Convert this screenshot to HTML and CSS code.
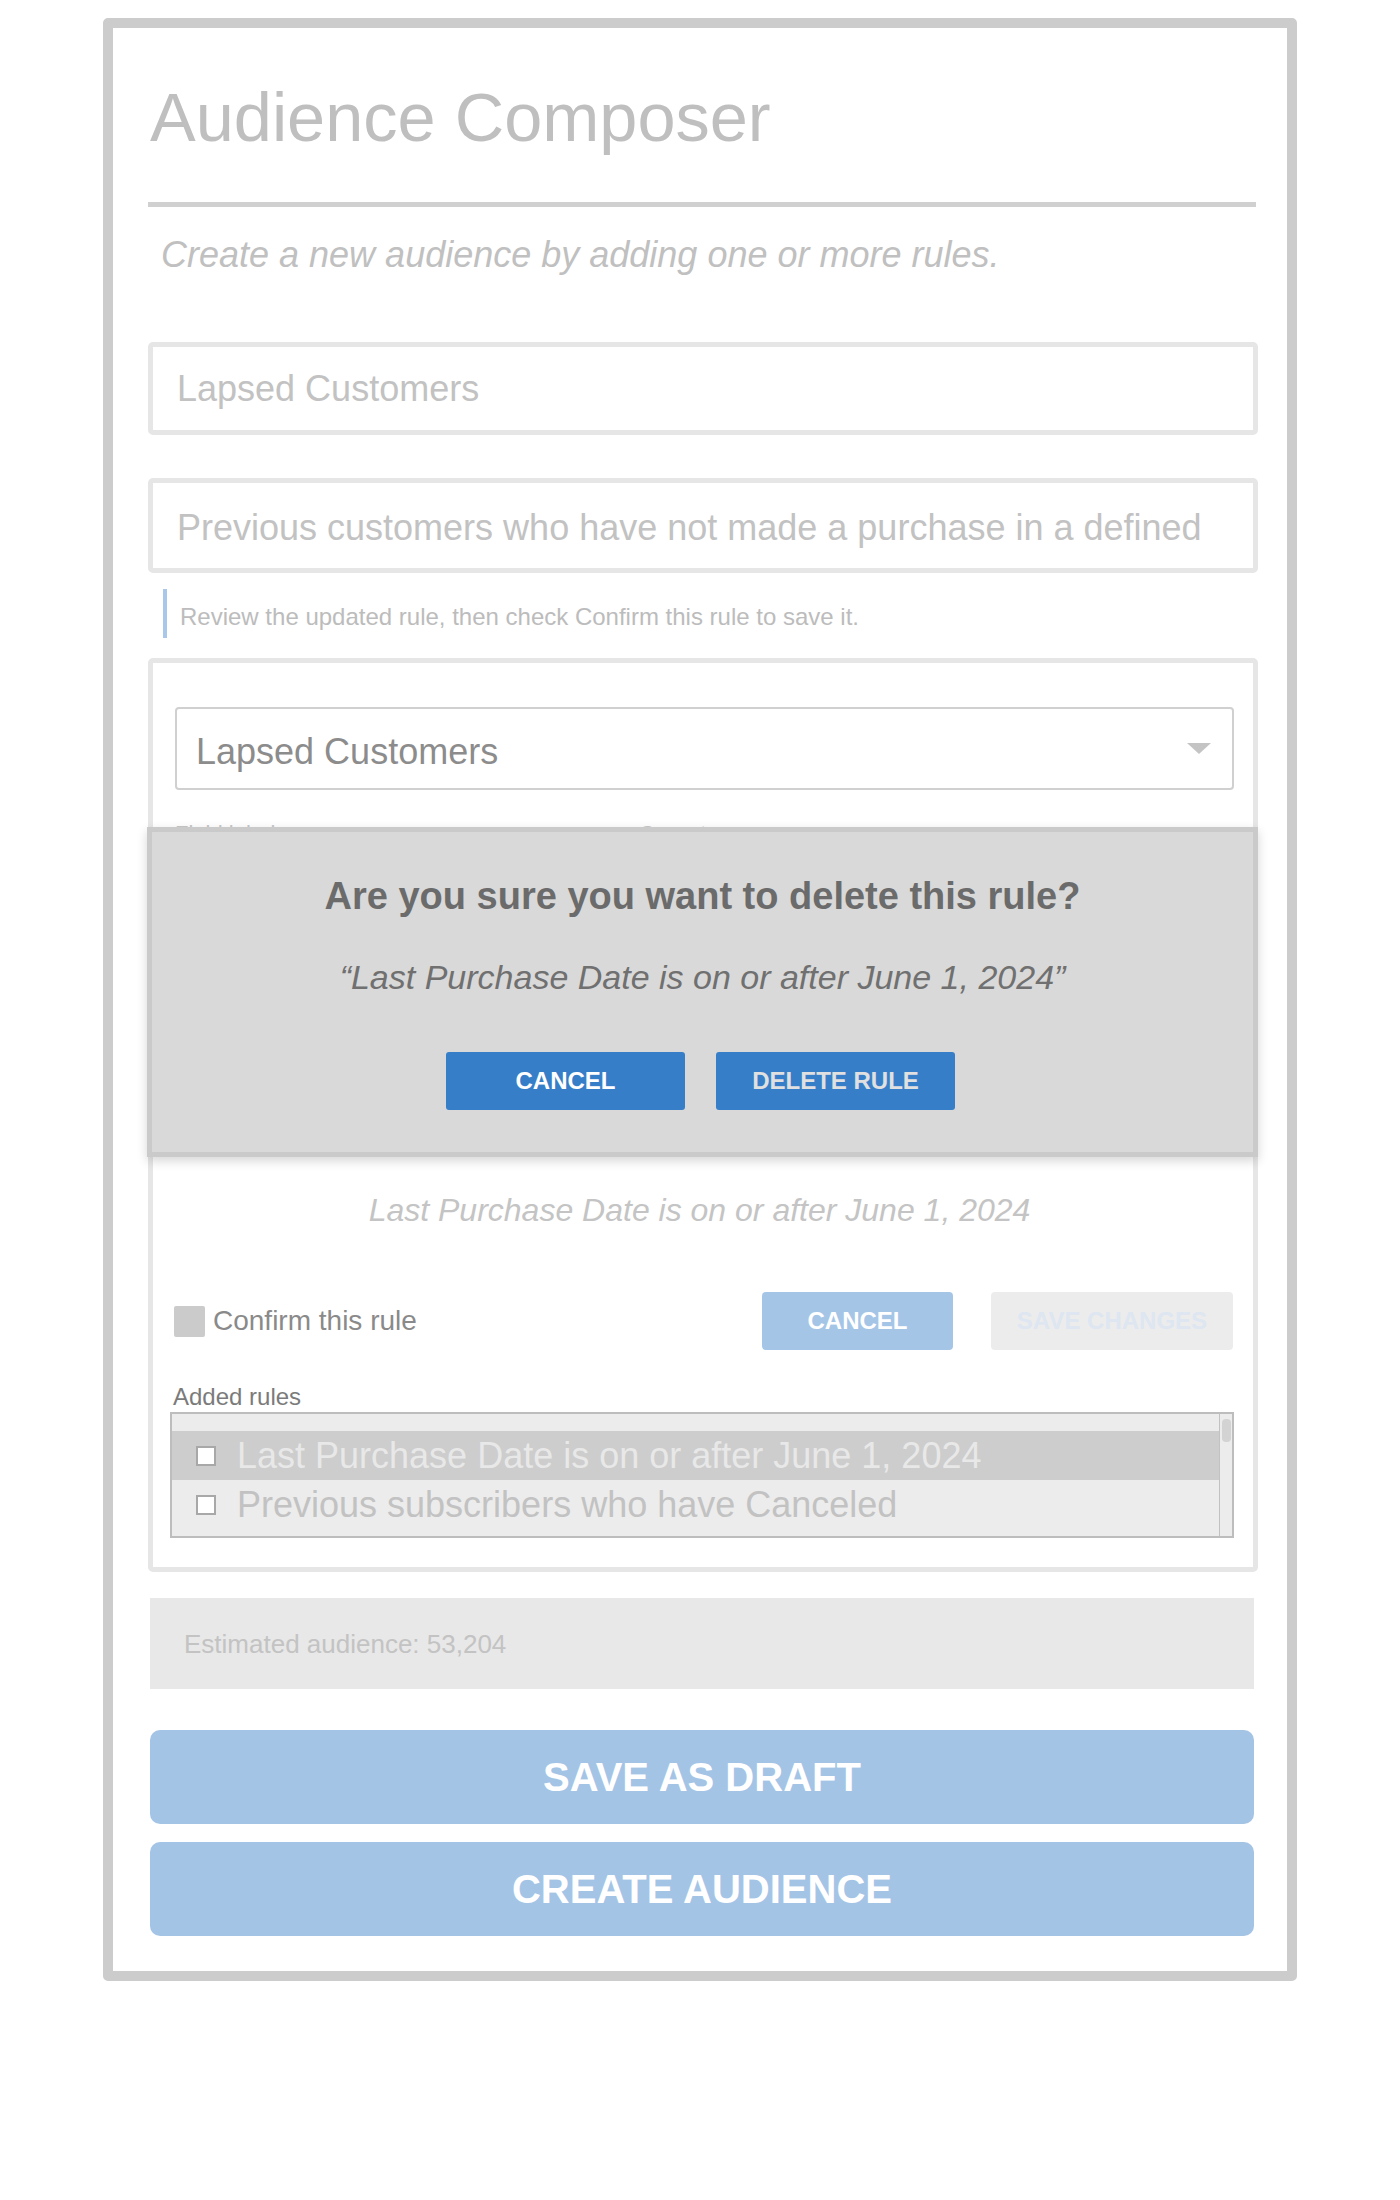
FILE: index.html
```html
<!DOCTYPE html>
<html lang="en">
<head>
    <meta charset="UTF-8">
    <meta name="viewport" content="width=device-width, initial-scale=1.0">
    <title>Audience Composer</title>
    <link rel="stylesheet" href="styles.css">
</head>
<body>
    <div class="composer">
        <div class="header">
            <h1>Audience Composer</h1>
        </div>
        <p class="subtitle">Create a new audience by adding one or more rules.</p>

        <input class="field name-field" type="text" value="Lapsed Customers">
        <textarea class="field desc-field" rows="1">Previous customers who have not made a purchase in a defined period of time.</textarea>

        <div class="hint">Review the updated rule, then check Confirm this rule to save it.</div>

        <div class="rule-card">
            <div class="select">
                <span>Lapsed Customers</span>
                <span class="caret"></span>
            </div>

            <!-- field editors sit under the delete dialog -->
            <div class="rule-fields">
                <div class="rule-field">
                    <label>Field label</label>
                    <div class="select small"></div>
                </div>
                <div class="rule-field">
                    <label>Operator</label>
                    <div class="select small"></div>
                </div>
                <div class="rule-field">
                    <div class="select small"></div>
                </div>
            </div>

            <p class="preview">Last Purchase Date is on or after June 1, 2024</p>

            <div class="confirm-row">
                <div class="confirm">
                    <span class="check-box"></span>
                    <span>Confirm this rule</span>
                </div>
                <div class="actions">
                    <button class="btn btn-light">CANCEL</button>
                    <button class="btn btn-disabled">SAVE CHANGES</button>
                </div>
            </div>

            <div class="added-label">Added rules</div>
            <div class="rule-list">
                <div class="rule-rows">
                    <div class="rule-row selected">
                        <span class="row-check"></span>
                        <span>Last Purchase Date is on or after June 1, 2024</span>
                    </div>
                    <div class="rule-row">
                        <span class="row-check"></span>
                        <span>Previous subscribers who have Canceled</span>
                    </div>
                </div>
                <div class="scrollbar"><div class="thumb"></div></div>
            </div>

            <div class="dialog">
                <h2>Are you sure you want to delete this rule?</h2>
                <p class="dialog-quote">“Last Purchase Date is on or after June 1, 2024”</p>
                <div class="dialog-actions">
                    <button class="btn btn-primary">CANCEL</button>
                    <button class="btn btn-primary btn-delete">DELETE RULE</button>
                </div>
            </div>
        </div>

        <div class="estimate">Estimated audience: 53,204</div>

        <button class="big-btn">SAVE AS DRAFT</button>
        <button class="big-btn">CREATE AUDIENCE</button>
    </div>
</body>
</html>
```

FILE: styles.css
```css
* {
    margin: 0;
    padding: 0;
    box-sizing: border-box;
}

body {
    font-family: "Liberation Sans", Arial, Helvetica, sans-serif;
    background: #fff;
    color: #bdbdbd;
}

.composer {
    width: 1194px;
    margin: 18px auto 0;
    border: 10px solid #cccccc;
    border-radius: 5px;
    padding: 52px 29px 35px 35px;
}

.header {
    border-bottom: 5px solid #d0d0d0;
    padding-bottom: 46px;
    margin-right: 2px;
}

.header h1 {
    font-size: 68.5px;
    line-height: 76px;
    font-weight: 400;
    color: #bfbfbf;
    padding-left: 2px;
}

.subtitle {
    margin-top: 28px;
    padding-left: 13px;
    font-size: 36px;
    line-height: 40px;
    font-style: italic;
    color: #c0c0c0;
}

.field {
    display: block;
    width: 100%;
    border: 5px solid #e6e6e6;
    border-radius: 5px;
    padding: 0 24px;
    font-family: inherit;
    font-size: 36px;
    color: #c2c2c2;
    background: #fff;
    outline: none;
}

.name-field {
    margin-top: 67px;
    height: 93px;
}

.desc-field {
    margin-top: 43px;
    height: 95px;
    padding-top: 15px;
    padding-bottom: 10px;
    line-height: 60px;
    resize: none;
    overflow: hidden;
}

.hint {
    margin: 16px 0 0 15px;
    border-left: 4px solid #a9c7e8;
    padding: 6px 0 0 13px;
    font-size: 24px;
    line-height: 43px;
    color: #bcbcbc;
}

.rule-card {
    position: relative;
    margin-top: 20px;
    border: 5px solid #e6e6e6;
    border-radius: 5px;
    padding: 44px 19px 29px 22px;
}

.select {
    display: flex;
    align-items: center;
    justify-content: space-between;
    height: 83px;
    border: 2px solid #d0d0d0;
    border-radius: 4px;
    padding: 6px 21px 0 19px;
    font-size: 36px;
    color: #8c8c8c;
    background: #fff;
}

.caret {
    width: 0;
    height: 0;
    margin-top: -6px;
    border-left: 12px solid transparent;
    border-right: 12px solid transparent;
    border-top: 11px solid #c4c4c4;
}

.rule-fields {
    display: grid;
    grid-template-columns: 441px 1fr;
    column-gap: 23px;
    row-gap: 24px;
    margin-top: 31px;
}

.rule-field label {
    display: block;
    font-size: 22px;
    line-height: 26px;
    color: #c8c8c8;
    margin-bottom: 8px;
}

.preview {
    margin-top: 146px;
    padding-right: 10px;
    text-align: center;
    font-size: 32px;
    line-height: 38px;
    font-style: italic;
    color: #c4c4c4;
}

.confirm-row {
    display: flex;
    align-items: center;
    justify-content: space-between;
    margin-top: 63px;
    padding-right: 1px;
}

.confirm {
    display: flex;
    align-items: center;
    gap: 8px;
    font-size: 28px;
    color: #8a8a8a;
    margin-left: -1px;
}

.check-box {
    width: 31px;
    height: 31px;
    background: #cbcbcb;
    border-radius: 2px;
}

.actions {
    display: flex;
    gap: 38px;
}

.btn {
    height: 58px;
    border: none;
    border-radius: 4px;
    font-family: inherit;
    font-size: 24px;
    font-weight: 700;
    color: #fff;
}

.btn-light {
    width: 191px;
    background: #a5c5e7;
}

.btn-disabled {
    width: 242px;
    background: #ececec;
    color: #dde6f1;
}

.added-label {
    margin-top: 33px;
    font-size: 24px;
    line-height: 28px;
    color: #7b7b7b;
    margin-left: -2px;
}

.rule-list {
    display: flex;
    height: 126px;
    margin: 1px 0 0 -5px;
    border: 2px solid #bdbdbd;
    background: #ececec;
}

.rule-rows {
    flex: 1;
    padding-top: 17px;
}

.rule-row {
    display: flex;
    align-items: center;
    gap: 21px;
    height: 49px;
    padding-left: 24px;
    font-size: 36px;
    line-height: 49px;
    color: #c2c2c2;
}

.rule-row.selected {
    background: #cdcdcd;
    color: #e8e8e8;
}

.row-check {
    width: 20px;
    height: 20px;
    border: 2px solid #a8a8a8;
    background: #fff;
}

.scrollbar {
    width: 13px;
    border-left: 1px solid #c2c2c2;
    padding: 5px 1px 0 2px;
}

.thumb {
    height: 23px;
    background: #d3d3d3;
    border-radius: 4px;
}

.dialog {
    position: absolute;
    top: 164px;
    left: -6px;
    right: -5px;
    height: 330px;
    border: 5px solid #cacaca;
    background: #d9d9d9;
    padding-top: 42px;
    text-align: center;
    box-shadow: 0 4px 10px rgba(0, 0, 0, 0.16);
}

.dialog h2 {
    font-size: 38px;
    line-height: 44px;
    font-weight: 700;
    color: #6b6b6b;
}

.dialog-quote {
    margin-top: 39px;
    font-size: 34px;
    line-height: 40px;
    font-style: italic;
    color: #707070;
}

.dialog-actions {
    display: flex;
    justify-content: center;
    gap: 31px;
    margin-top: 55px;
    padding-right: 4px;
}

.btn-primary {
    width: 239px;
    background: #367ec8;
    border-radius: 3px;
}

.btn-delete {
    color: #e0e0e0;
}

.estimate {
    margin: 26px 4px 0 2px;
    background: #e8e8e8;
    padding: 31px 34px 30px;
    font-size: 26px;
    line-height: 30px;
    color: #c3c3c3;
}

.big-btn {
    display: block;
    width: calc(100% - 6px);
    height: 94px;
    margin: 18px 4px 0 2px;
    border: none;
    border-radius: 10px;
    background: #a4c4e6;
    font-family: inherit;
    font-size: 40px;
    font-weight: 700;
    color: #fff;
}

.estimate + .big-btn {
    margin-top: 41px;
}
```
